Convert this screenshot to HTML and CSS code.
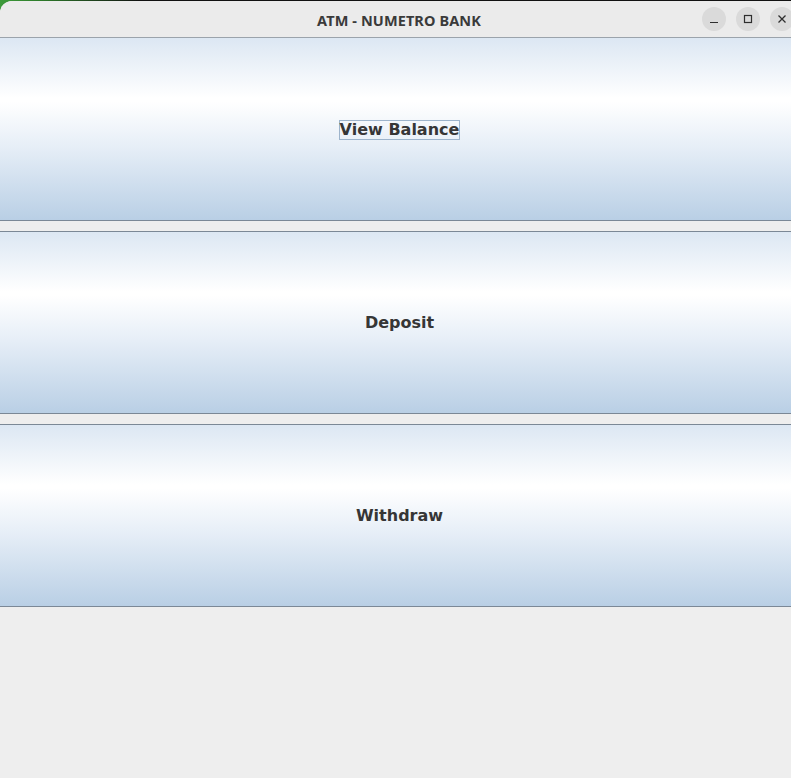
FILE: index.html
```html
<!DOCTYPE html>
<html>
<head>
<meta charset="utf-8">
<link rel="stylesheet" href="styles.css">
</head>
<body>
<div class="desktop">
  <div class="window">
    <header class="titlebar">
      <div class="title">ATM - NUMETRO BANK</div>
      <div class="controls">
        <span class="ctl"><svg width="24" height="24" viewBox="0 0 24 24"><path d="M8 15.5h8" stroke="#2e2e2e" stroke-width="1.2"/></svg></span>
        <span class="ctl"><svg width="24" height="24" viewBox="0 0 24 24"><rect x="8.5" y="8.5" width="7" height="7" fill="none" stroke="#2e2e2e" stroke-width="1.2"/></svg></span>
        <span class="ctl"><svg width="24" height="24" viewBox="0 0 24 24"><path d="M8.5 8.5l7 7M15.5 8.5l-7 7" stroke="#2e2e2e" stroke-width="1.3"/></svg></span>
      </div>
    </header>
    <main class="content">
      <button class="btn first"><span class="focus">View Balance</span></button>
      <button class="btn"><span>Deposit</span></button>
      <button class="btn"><span>Withdraw</span></button>
    </main>
  </div>
</div>
</body>
</html>
```

FILE: styles.css
```css
html, body {
  margin: 0;
  padding: 0;
  width: 791px;
  height: 778px;
  overflow: hidden;
  background: #1a1a1a;
}
.desktop {
  width: 791px;
  height: 778px;
  background: linear-gradient(90deg, #3d9a3a 0px, #2d7b2a 40px, #111 140px, #111 100%);
  padding-top: 1px;
  box-sizing: border-box;
}
.window {
  height: 777px;
  background: #eeeeee;
  border-top-left-radius: 12px;
  overflow: hidden;
  display: flex;
  flex-direction: column;
}
.titlebar {
  height: 36px;
  flex: none;
  background: #ebebeb;
  border-bottom: 1px solid #9ba3ab;
  position: relative;
  display: flex;
  align-items: center;
  justify-content: center;
}
.title {
  font-family: "Noto Sans", "DejaVu Sans", sans-serif;
  font-weight: 700;
  font-size: 14.5px;
  color: #3a3a3a;
  letter-spacing: 0.1px;
  margin-left: 7px;
  padding-top: 1px;
}
.controls {
  position: absolute;
  right: -3px;
  top: 6px;
  display: flex;
  gap: 10px;
}
.ctl {
  width: 24px;
  height: 24px;
  border-radius: 50%;
  background: #dadada;
  display: block;
}
.ctl svg { display: block; }
.content {
  display: flex;
  flex-direction: column;
  gap: 10px;
}
.btn {
  height: 183px;
  margin: 0;
  padding: 1px 0 0 8px;
  border: 1px solid #7b8896;
  border-left: none;
  border-right: none;
  background: linear-gradient(180deg, #dce7f3 0%, #ffffff 33%, #ffffff 35%, #e6eef7 60%, #b9cfe5 100%);
  display: flex;
  align-items: center;
  justify-content: center;
  font-family: "DejaVu Sans", sans-serif;
  font-weight: 700;
  font-size: 16px;
  color: #363636;
}
.btn.first {
  border-top: none;
}
.btn span {
  padding: 0 0;
  line-height: 18px;
  border: 1px solid transparent;
}
.btn .focus {
  border-color: #9db4cc;
}
```
